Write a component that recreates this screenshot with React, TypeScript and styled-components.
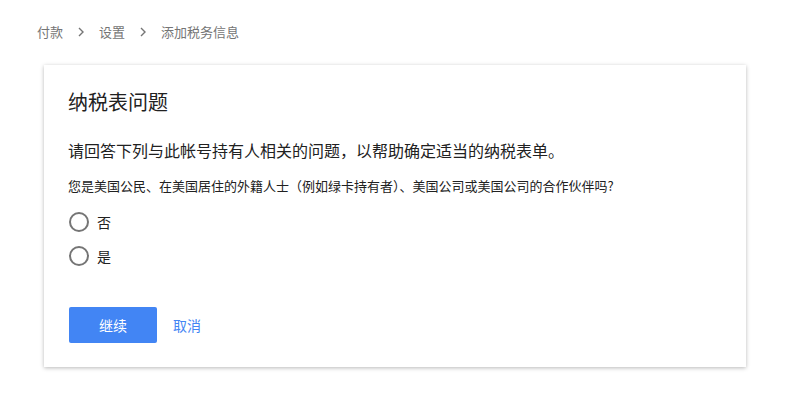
import React, { useState } from 'react';
import styled, { createGlobalStyle } from 'styled-components';

const GlobalStyle = createGlobalStyle`
  body {
    margin: 0;
    background: #ffffff;
    font-family: "Noto Sans CJK SC", "Noto Sans", Roboto, sans-serif;
    color: #212121;
  }
`;

const Page = styled.div`
  padding: 22px 0 28px 0;
`;

const Breadcrumb = styled.nav`
  display: flex;
  align-items: center;
  height: 20px;
  padding-left: 37px;
  font-size: 13px;
  color: #757575;
`;

const Crumb = styled.span`
  line-height: 20px;
`;

const Chevron = styled.svg`
  width: 10px;
  height: 12px;
  margin: 0 13px 0 13px;
`;

const Card = styled.section`
  margin: 23px 0 0 44px;
  width: 702px;
  box-sizing: border-box;
  padding: 23px 24px 24px 24px;
  background: #fff;
  box-shadow: 0 1px 4px rgba(0, 0, 0, 0.28);
`;

const Title = styled.h2`
  margin: 0;
  font-size: 20px;
  font-weight: 400;
  line-height: 28px;
  color: #212121;
`;

const Lead = styled.p`
  margin: 22px 0 0 0;
  font-size: 16px;
  line-height: 24px;
  color: #212121;
`;

const Question = styled.p`
  margin: 14px 0 0 0;
  font-size: 13px;
  line-height: 20px;
  color: #212121;
`;

const Options = styled.div`
  margin-top: 9px;
  display: flex;
  flex-direction: column;
`;

const Option = styled.label`
  display: flex;
  align-items: center;
  height: 34px;
  padding-left: 1px;
  font-size: 14px;
  cursor: pointer;
`;

const Circle = styled.span<{ $on: boolean }>`
  width: 20px;
  height: 20px;
  box-sizing: border-box;
  border-radius: 50%;
  border: 2px solid ${({ $on }) => ($on ? '#4285f4' : '#757575')};
  margin-right: 8px;
  display: flex;
  align-items: center;
  justify-content: center;
  &::after {
    content: '';
    width: 10px;
    height: 10px;
    border-radius: 50%;
    background: ${({ $on }) => ($on ? '#4285f4' : 'transparent')};
  }
`;

const Actions = styled.div`
  margin-top: 34px;
  display: flex;
  align-items: center;
  padding-left: 1px;
`;

const PrimaryButton = styled.button`
  width: 88px;
  height: 36px;
  border: none;
  border-radius: 2px;
  background: #4285f4;
  color: #fff;
  font-family: inherit;
  font-size: 14px;
  cursor: pointer;
`;

const TextButton = styled.button`
  margin-left: 8px;
  padding: 0 8px;
  height: 36px;
  border: none;
  background: transparent;
  color: #4285f4;
  font-family: inherit;
  font-size: 14px;
  cursor: pointer;
`;

const ChevronIcon = () => (
  <Chevron viewBox="0 0 10 12">
    <path d="M3 2 L7 6 L3 10" fill="none" stroke="#757575" strokeWidth="1.4" />
  </Chevron>
);

const App = () => {
  const [answer, setAnswer] = useState<string | null>(null);

  return (
    <Page>
      <GlobalStyle />
      <Breadcrumb>
        <Crumb>付款</Crumb>
        <ChevronIcon />
        <Crumb>设置</Crumb>
        <ChevronIcon />
        <Crumb>添加税务信息</Crumb>
      </Breadcrumb>
      <Card>
        <Title>纳税表问题</Title>
        <Lead>请回答下列与此帐号持有人相关的问题，以帮助确定适当的纳税表单。</Lead>
        <Question>您是美国公民、在美国居住的外籍人士（例如绿卡持有者）、美国公司或美国公司的合作伙伴吗?</Question>
        <Options>
          {['否', '是'].map((label) => (
            <Option key={label} onClick={() => setAnswer(label)}>
              <Circle $on={answer === label} />
              {label}
            </Option>
          ))}
        </Options>
        <Actions>
          <PrimaryButton>继续</PrimaryButton>
          <TextButton>取消</TextButton>
        </Actions>
      </Card>
    </Page>
  );
};

export default App;
